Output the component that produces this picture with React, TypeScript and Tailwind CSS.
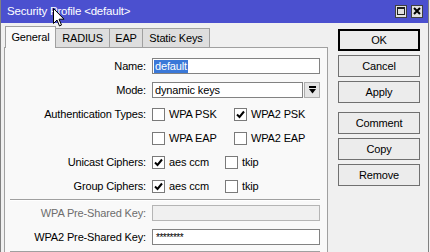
import React from "react";

const Check = ({ checked }: { checked?: boolean }) => (
  <span className="w-[13px] h-[13px] border border-[#7a7a7a] bg-white flex items-center justify-center shrink-0">
    {checked && (
      <svg width="9" height="9" viewBox="0 0 9 9">
        <path d="M1 4.5 L3.5 7 L8 1.5" stroke="#000" strokeWidth="2" fill="none" />
      </svg>
    )}
  </span>
);

const Opt = ({ label, checked, w }: { label: string; checked?: boolean; w: string }) => (
  <div className={`flex items-center gap-[4px] ${w}`}>
    <Check checked={checked} />
    <span>{label}</span>
  </div>
);

const Row = ({ label, disabled, children }: { label: string; disabled?: boolean; children: React.ReactNode }) => (
  <div className="flex items-center h-[24px]">
    <div className={`w-[142px] text-right pr-[1px] ${disabled ? "text-[#6d6d6d]" : "text-black"}`}>{label}</div>
    <div className="ml-[5px] flex items-center">{children}</div>
  </div>
);

const Sep = () => (
  <div className="h-[3px] flex items-center">
    <div className="ml-[5px] w-[310px] border-t border-[#a0a0a0] border-b border-b-white" />
  </div>
);

const Btn = ({ label, def }: { label: string; def?: boolean }) => (
  <div
    className={`h-[22px] flex items-center justify-center bg-[#ececec] ${
      def ? "border-2 border-black" : "border border-[#707070]"
    }`}
  >
    {label}
  </div>
);

export default function App() {
  const tabs = ["General", "RADIUS", "EAP", "Static Keys"];
  const tabW = ["w-[51px]", "w-[55px]", "w-[34px]", "w-[68px]"];
  return (
    <div className="w-[430px] h-[252px] overflow-hidden bg-[#f0f0f0] font-['Liberation_Sans',Arial,sans-serif] text-[11px] tracking-[-0.15px] text-black relative">
      <div className="w-[429px] h-[252px] border-x border-[#808080] flex flex-col">
        {/* title bar */}
        <div className="h-[23px] shrink-0 bg-[#4b50cf] flex items-center pl-[6px] pr-[5px] text-white text-[11.5px] tracking-[-0.2px]">
          <span className="flex-1">Security Profile &lt;default&gt;</span>
          <div className="flex gap-[4px] items-center -mt-[1px]">
            <div className="w-[12px] h-[13px] bg-[#e0e0e0] border border-[#404040] flex items-center justify-center">
              <div className="w-[8px] h-[8px] border border-[#202020] border-t-2" />
            </div>
            <div className="w-[12px] h-[13px] bg-[#e0e0e0] border border-[#404040] flex items-center justify-center">
              <svg width="8" height="8" viewBox="0 0 8 8">
                <path d="M1 1 L7 7 M7 1 L1 7" stroke="#000" strokeWidth="2" />
              </svg>
            </div>
          </div>
        </div>

        <div className="flex flex-1">
          {/* tabs + panel */}
          <div className="ml-[3px] w-[324px] pt-[3px] flex flex-col">
            <div className="h-[21px] flex items-end pl-[1px]">
              {tabs.map((t, i) => (
                <div
                  key={t}
                  className={`${tabW[i]} flex items-center justify-center border-t border-x border-[#a0a0a0] ${
                    i === 0
                      ? "h-[22px] -mb-[1px] bg-[#f9f9f9] relative z-10"
                      : "h-[19px] bg-[#dedede] -ml-px"
                  }`}
                >
                  {t}
                </div>
              ))}
            </div>
            <div className="flex-1 border border-[#a0a0a0] bg-[#f9f9f9] pt-[6px]">
              <Row label="Name:">
                <div className="w-[168px] h-[16px] border border-[#828282] bg-white flex items-center pl-[1px]">
                  <span className="bg-[#3a78d8] text-white px-[1px] leading-[13px]">default</span>
                </div>
              </Row>
              <Row label="Mode:">
                <div className="w-[151px] h-[16px] border border-[#828282] bg-white flex items-center pl-[2px]">
                  dynamic keys
                </div>
                <div className="ml-[1px] w-[16px] h-[16px] border border-[#adadad] bg-[#e5e5e5] flex items-center justify-center">
                  <svg width="7" height="8" viewBox="0 0 7 8">
                    <rect x="0" y="0" width="7" height="2" fill="#000" />
                    <path d="M0 3 L7 3 L3.5 7.5 Z" fill="#000" />
                  </svg>
                </div>
              </Row>
              <Row label="Authentication Types:">
                <Opt label="WPA PSK" w="w-[82px]" />
                <Opt label="WPA2 PSK" checked w="w-[86px]" />
              </Row>
              <Row label="">
                <Opt label="WPA EAP" w="w-[82px]" />
                <Opt label="WPA2 EAP" w="w-[86px]" />
              </Row>
              <Row label="Unicast Ciphers:">
                <Opt label="aes ccm" checked w="w-[73px]" />
                <Opt label="tkip" w="w-[50px]" />
              </Row>
              <Row label="Group Ciphers:">
                <Opt label="aes ccm" checked w="w-[73px]" />
                <Opt label="tkip" w="w-[50px]" />
              </Row>
              <Sep />
              <Row label="WPA Pre-Shared Key:" disabled>
                <div className="w-[168px] h-[16px] border border-[#b5b5b5] bg-[#f0f0f0]" />
              </Row>
              <Row label="WPA2 Pre-Shared Key:">
                <div className="w-[168px] h-[16px] border border-[#828282] bg-white flex items-center pl-[3px] text-[10px] tracking-[-0.5px]">
                  ********
                </div>
              </Row>
              <div className="pt-[1px]">
                <Sep />
              </div>
            </div>
          </div>

          {/* buttons */}
          <div className="ml-[10px] w-[82px] pt-[6px] flex flex-col">
            <Btn label="OK" def />
            <div className="mt-[4px] flex flex-col gap-[4px]">
              <Btn label="Cancel" />
              <Btn label="Apply" />
            </div>
            <div className="mt-[9px] flex flex-col gap-[4px]">
              <Btn label="Comment" />
              <Btn label="Copy" />
              <Btn label="Remove" />
            </div>
          </div>
        </div>
      </div>

      {/* mouse cursor */}
      <svg className="absolute left-[53px] top-[8px]" width="12" height="19" viewBox="0 0 12 19">
        <path d="M0.5 0.5 L0.5 15.5 L4 12 L6.5 18 L8.5 17 L6 11.2 L11 11.2 Z" fill="#fff" stroke="#000" strokeWidth="1" />
      </svg>
    </div>
  );
}
